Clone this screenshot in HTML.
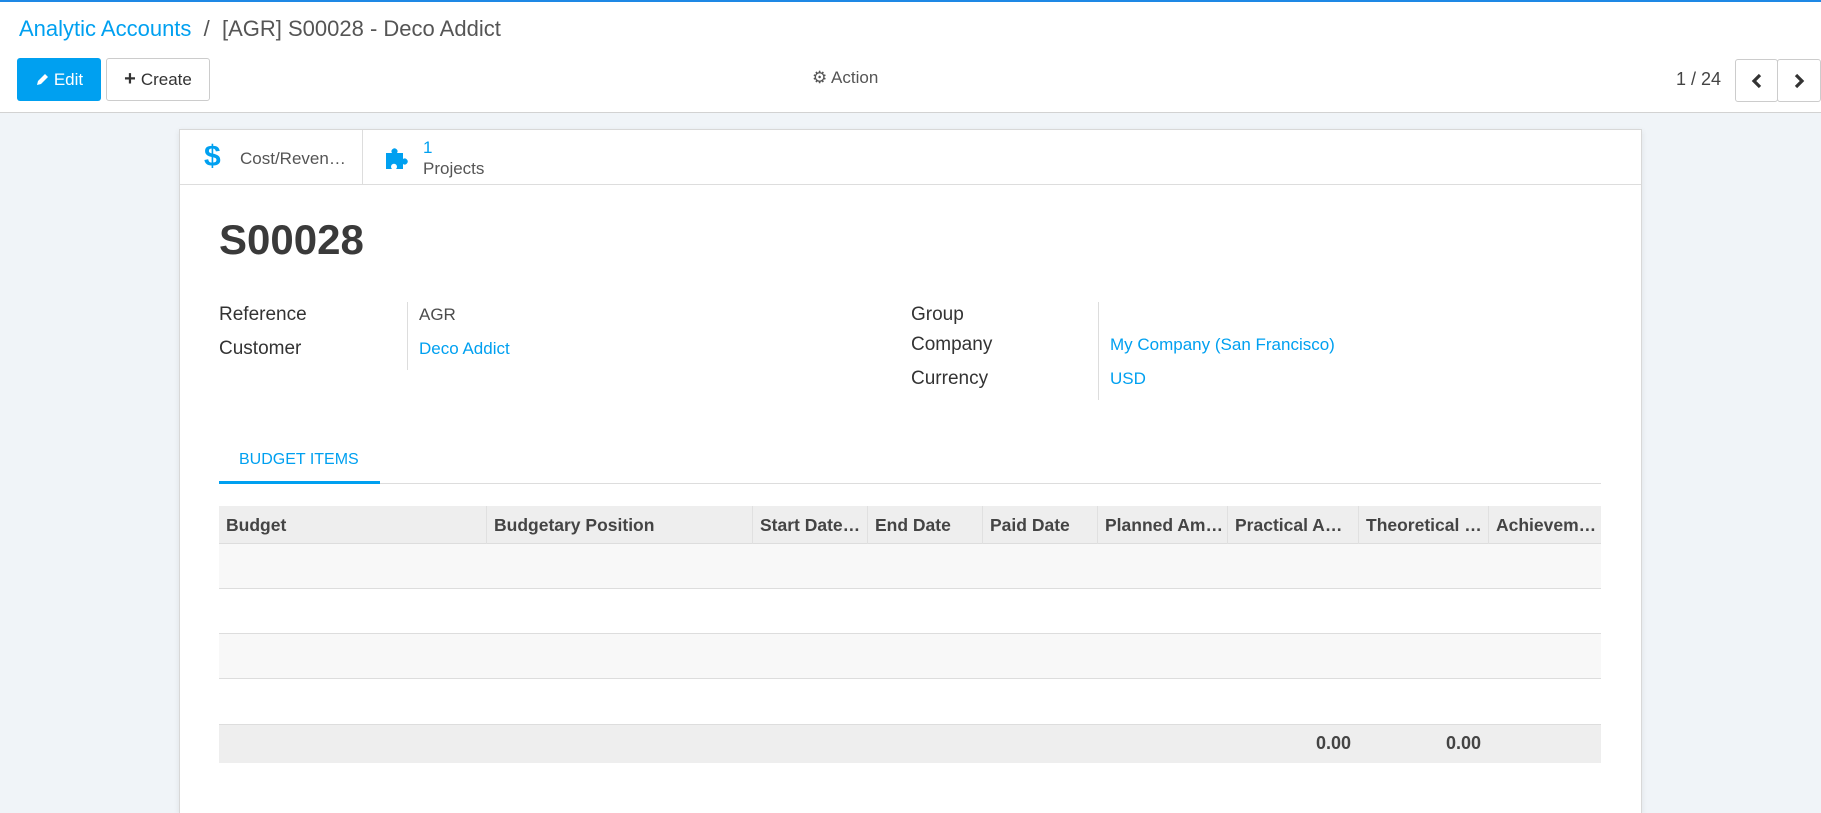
<!DOCTYPE html>
<html><head><meta charset="utf-8"><style>
*{box-sizing:border-box;margin:0;padding:0}
html{width:1821px;height:813px;overflow:hidden}
body{width:1821px;height:813px;overflow:hidden;background:#f0f4f8;font-family:"Liberation Sans",sans-serif;color:#4c4c4c;position:relative}
.a{position:absolute}
.top{left:0;top:0;width:1821px;height:113px;background:#fff;border-top:2px solid #1e88e5;border-bottom:1px solid #d2d2d2}
.btn{position:absolute;border-radius:3px;font-size:17px;display:flex;align-items:center;justify-content:center;gap:5px}
.sheet{left:179px;top:129px;width:1463px;height:684px;background:#fff;border:1px solid #d8d8d8;border-bottom:none;box-shadow:0 2px 6px rgba(0,0,0,.08)}
.lbl{font-size:19px;color:#333;font-weight:500}
.val{font-size:17px}
.blue{color:#00a0f0}
.th{position:absolute;top:0;height:38px;line-height:38px;padding-left:7px;font-size:17.5px;font-weight:bold;color:#444;border-left:1px solid #e0e0e0;white-space:nowrap;overflow:hidden}
</style></head><body>
<div class="a top">
 <div class="a" style="left:19px;top:14px;font-size:22px;color:#555;white-space:nowrap"><span style="color:#00a0f0">Analytic Accounts</span>&nbsp; / &nbsp;[AGR] S00028 - Deco Addict</div>
 <div class="btn" style="left:17px;top:56px;width:84px;height:43px;background:#00a0f0;color:#fff"><svg width="14" height="14" viewBox="0 0 14 14"><path d="M2 12l1-4 7-7 3 3-7 7z" fill="#fff"/></svg>Edit</div>
 <div class="btn" style="left:106px;top:56px;width:104px;height:43px;border:1px solid #ccc;color:#333"><span style="font-weight:bold;font-size:20px">+</span>Create</div>
 <div class="a" style="left:812px;top:66px;font-size:17px;color:#555">⚙ Action</div>
 <div class="a" style="left:1676px;top:67px;font-size:18px;color:#444">1 / 24</div>
 <div class="btn" style="left:1735px;top:57px;width:43px;height:43px;border:1px solid #ccc"><svg width="14" height="16" viewBox="0 0 14 16"><path d="M10 2L4 8l6 6" stroke="#333" stroke-width="3.2" fill="none"/></svg></div>
 <div class="btn" style="left:1777px;top:57px;width:44px;height:43px;border:1px solid #ccc"><svg width="14" height="16" viewBox="0 0 14 16"><path d="M4 2l6 6-6 6" stroke="#333" stroke-width="3.2" fill="none"/></svg></div>
</div>
<div class="a sheet">
 <div class="a" style="left:0;top:0;width:1461px;height:55px;border-bottom:1px solid #ddd"></div>
 <div class="a" style="left:182px;top:0;width:1px;height:55px;background:#ddd"></div>
 <div class="a blue" style="left:24px;top:10px;font-size:30px;font-weight:bold">$</div>
 <div class="a" style="left:60px;top:19px;font-size:17px;color:#555">Cost/Reven…</div>
 <svg class="a" style="left:203px;top:15px" width="26" height="26" viewBox="0 0 26 26"><path d="M3 8h6a3 3 0 1 1 5 0h6v6a3 3 0 1 1 0 5v5h-7a3 3 0 1 0-4 0H3z" fill="#00a0f0"/></svg>
 <div class="a blue" style="left:243px;top:8px;font-size:17px">1</div>
 <div class="a" style="left:243px;top:29px;font-size:17px;color:#555">Projects</div>
 <div class="a" style="left:39px;top:86px;font-size:42px;font-weight:bold;color:#3a3a3a">S00028</div>
 <div class="a lbl" style="left:39px;top:174px">Reference</div>
 <div class="a lbl" style="left:39px;top:208px">Customer</div>
 <div class="a" style="left:227px;top:172px;width:1px;height:68px;background:#ddd"></div>
 <div class="a val" style="left:239px;top:175px">AGR</div>
 <div class="a val blue" style="left:239px;top:209px">Deco Addict</div>
 <div class="a lbl" style="left:731px;top:174px">Group</div>
 <div class="a lbl" style="left:731px;top:204px">Company</div>
 <div class="a lbl" style="left:731px;top:238px">Currency</div>
 <div class="a" style="left:918px;top:172px;width:1px;height:98px;background:#ddd"></div>
 <div class="a val blue" style="left:930px;top:205px">My Company (San Francisco)</div>
 <div class="a val blue" style="left:930px;top:239px">USD</div>
 <div class="a blue" style="left:59px;top:321px;font-size:16px;font-weight:500">BUDGET ITEMS</div>
 <div class="a" style="left:39px;top:353px;width:1382px;height:1px;background:#ddd"></div>
 <div class="a" style="left:39px;top:351px;width:161px;height:3px;background:#00a0f0"></div>
 <div class="a" style="left:39px;top:376px;width:1382px;height:257px">
  <div class="a" style="left:0;top:0;width:1382px;height:38px;background:#eee;border-bottom:1px solid #ddd">
   <div class="th" style="left:0;width:267px;border:0">Budget</div>
   <div class="th" style="left:267px;width:266px">Budgetary Position</div>
   <div class="th" style="left:533px;width:115px">Start Date…</div>
   <div class="th" style="left:648px;width:115px">End Date</div>
   <div class="th" style="left:763px;width:115px">Paid Date</div>
   <div class="th" style="left:878px;width:130px">Planned Am…</div>
   <div class="th" style="left:1008px;width:131px">Practical A…</div>
   <div class="th" style="left:1139px;width:130px">Theoretical …</div>
   <div class="th" style="left:1269px;width:113px">Achievem…</div>
  </div>
  <div class="a" style="left:0;top:38px;width:1382px;height:45px;background:#f8f8f8;border-bottom:1px solid #ddd"></div>
  <div class="a" style="left:0;top:83px;width:1382px;height:45px;border-bottom:1px solid #ddd"></div>
  <div class="a" style="left:0;top:128px;width:1382px;height:45px;background:#f8f8f8;border-bottom:1px solid #ddd"></div>
  <div class="a" style="left:0;top:218px;width:1382px;height:39px;background:#eee;border-top:1px solid #ddd">
   <div class="a" style="left:1097px;top:8px;font-size:18px;font-weight:bold;color:#444">0.00</div>
   <div class="a" style="left:1227px;top:8px;font-size:18px;font-weight:bold;color:#444">0.00</div>
  </div>
 </div>
</div>
</body></html>
